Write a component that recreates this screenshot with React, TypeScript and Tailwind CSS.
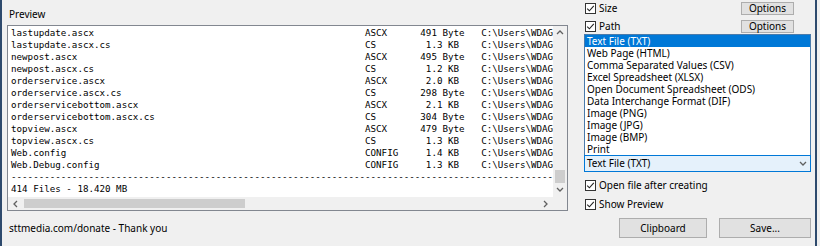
const ROWS: [string, string, string][] = [
  ['lastupdate.ascx', 'ASCX', '491 Byte'],
  ['lastupdate.ascx.cs', 'CS', '1.3 KB'],
  ['newpost.ascx', 'ASCX', '495 Byte'],
  ['newpost.ascx.cs', 'CS', '1.2 KB'],
  ['orderservice.ascx', 'ASCX', '2.0 KB'],
  ['orderservice.ascx.cs', 'CS', '298 Byte'],
  ['orderservicebottom.ascx', 'ASCX', '2.1 KB'],
  ['orderservicebottom.ascx.cs', 'CS', '304 Byte'],
  ['topview.ascx', 'ASCX', '479 Byte'],
  ['topview.ascx.cs', 'CS', '1.3 KB'],
  ['Web.config', 'CONFIG', '1.4 KB'],
  ['Web.Debug.config', 'CONFIG', '1.3 KB'],
];

const FORMATS = [
  'Text File (TXT)',
  'Web Page (HTML)',
  'Comma Separated Values (CSV)',
  'Excel Spreadsheet (XLSX)',
  'Open Document Spreadsheet (ODS)',
  'Data Interchange Format (DIF)',
  'Image (PNG)',
  'Image (JPG)',
  'Image (BMP)',
  'Print',
];

const UI_FONT = "font-['Noto_Sans',Arial,sans-serif]";

function formatRow([name, type, size]: [string, string, string]) {
  const sizeCol = (size.endsWith('Byte') ? size : ' ' + size).padEnd(11);
  return name.padEnd(64) + type.padEnd(10) + sizeCol + 'C:\\Users\\WDAG';
}

function Chevron({ dir }: { dir: 'up' | 'down' | 'left' | 'right' }) {
  const d = {
    up: 'M1 5 L4 2 L7 5',
    down: 'M1 2 L4 5 L7 2',
    left: 'M5 1 L2 4 L5 7',
    right: 'M2 1 L5 4 L2 7',
  }[dir];
  return (
    <svg width="8" height="8" viewBox="0 0 8 8">
      <path d={d} fill="none" stroke="#606060" strokeWidth="1.3" />
    </svg>
  );
}

function Check({ label }: { label: string }) {
  return (
    <div className="flex items-center gap-[3px]">
      <div className="w-[11px] h-[11px] border border-[#333] bg-white flex items-center justify-center">
        <svg width="9" height="9" viewBox="0 0 9 9">
          <path d="M1.2 4.6 L3.4 6.8 L7.8 1.8" fill="none" stroke="#222" strokeWidth="1.1" />
        </svg>
      </div>
      <span className="text-[10px] leading-[13px] text-black">{label}</span>
    </div>
  );
}

function WinButton({ label, className }: { label: string; className: string }) {
  return (
    <div
      className={`bg-[#e1e1e1] border border-[#adadad] flex items-center justify-center text-[10px] text-black ${className}`}
    >
      {label}
    </div>
  );
}

export default function App() {
  return (
    <div className={`w-[820px] h-[246px] bg-[#f0f0f0] flex overflow-hidden ${UI_FONT}`}>
      <div className="w-[2px] bg-[#2e4a6d]" />

      {/* preview side */}
      <div className="flex flex-col pl-[5px] w-[566px]">
        <div className="h-[25px] pt-[7px] pl-[2px] text-[10px] leading-[14px] text-black">Preview</div>
        <div className="h-[186px] w-[561px] border border-[#828790] bg-white flex flex-col">
          <div className="flex h-[171px]">
            <div className="flex-1 overflow-hidden pl-[3px] pt-[1px]">
              <pre className="font-['DejaVu_Sans_Mono',monospace] text-[9.2px] leading-[12px] text-black whitespace-pre">
                {ROWS.map(formatRow).join('\n') + '\n' + '-'.repeat(98) + '\n414 Files - 18.420 MB'}
              </pre>
            </div>
            <div className="w-[14px] bg-[#f0f0f0] flex flex-col">
              <div className="h-[14px] flex items-center justify-center">
                <Chevron dir="up" />
              </div>
              <div className="flex-1 flex flex-col justify-end px-[2px]">
                <div className="h-[13px] bg-[#cdcdcd]" />
              </div>
              <div className="h-[14px] flex items-center justify-center">
                <Chevron dir="down" />
              </div>
            </div>
          </div>
          <div className="flex h-[13px]">
            <div className="flex-1 bg-[#f0f0f0] flex">
              <div className="w-[16px] flex items-center justify-center">
                <Chevron dir="left" />
              </div>
              <div className="py-[2px] w-[221px]">
                <div className="h-full bg-[#cdcdcd]" />
              </div>
              <div className="flex-1" />
              <div className="w-[14px] flex items-center justify-center">
                <Chevron dir="right" />
              </div>
            </div>
            <div className="w-[14px] bg-[#f0f0f0]" />
          </div>
        </div>
        <div className="mt-[10px] pl-[2px] text-[10px] leading-[14px] text-black">sttmedia.com/donate - Thank you</div>
      </div>

      {/* options side */}
      <div className="ml-[16px] w-[227px] flex flex-col">
        <div className="h-[16px] flex items-center pl-[1px]">
          <Check label="Size" />
          <div className="flex-1" />
          <WinButton label="Options" className="w-[53px] h-[13px] mr-[17px]" />
        </div>
        <div className="mt-[2px] h-[16px] flex items-center pl-[1px]">
          <Check label="Path" />
          <div className="flex-1" />
          <WinButton label="Options" className="w-[53px] h-[13px] mr-[17px]" />
        </div>
        <div className="border-x border-t border-[#4a7bab] bg-white">
          {FORMATS.map((f, i) => (
            <div
              key={f}
              className={`h-[12px] pl-[2px] text-[10px] leading-[12px] ${
                i === 0 ? 'bg-[#0078d7] text-white' : 'text-black'
              }`}
            >
              {f}
            </div>
          ))}
        </div>
        <div className="h-[17px] border border-[#0078d7] bg-[#e5f1fb] flex items-center pl-[2px] pr-[3px]">
          <span className="flex-1 text-[10px] leading-[13px] text-black">Text File (TXT)</span>
          <Chevron dir="down" />
        </div>
        <div className="mt-[7px] h-[13px] flex items-center pl-[1px]">
          <Check label="Open file after creating" />
        </div>
        <div className="mt-[6px] h-[13px] flex items-center pl-[1px]">
          <Check label="Show Preview" />
        </div>
        <div className="mt-[7px] flex justify-end gap-[12px]">
          <WinButton label="Clipboard" className="w-[88px] h-[20px]" />
          <WinButton label="Save..." className="w-[92px] h-[20px]" />
        </div>
      </div>

      <div className="w-[4px]" />
      <div className="w-[2px] bg-[#2e4a6d]" />
    </div>
  );
}
